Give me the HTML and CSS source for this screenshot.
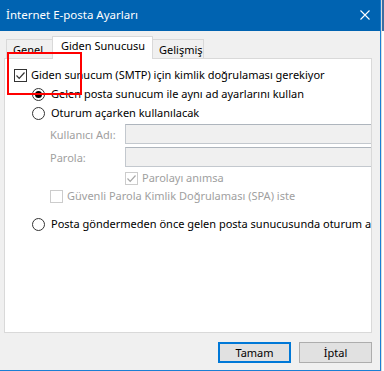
FILE: index.html
```html
<!DOCTYPE html>
<html lang="tr">
<head>
<meta charset="utf-8">
<title>İnternet E-posta Ayarları</title>
<link rel="stylesheet" href="styles.css">
</head>
<body>
<div class="page">
  <div class="dialog">
    <div class="titlebar">
      <span class="title">İnternet E-posta Ayarları</span>
      <svg class="close" width="10" height="10" viewBox="0 0 10 10"><path d="M0.5 0.5 L9.5 9.5 M9.5 0.5 L0.5 9.5" stroke="#fff" stroke-width="1.1" fill="none"/></svg>
    </div>
    <div class="tabs">
      <div class="tab first">Genel</div>
      <div class="tab active">Giden Sunucusu</div>
      <div class="tab">Gelişmiş</div>
    </div>
    <div class="panel">
      <div class="row r1">
        <span class="cb"><svg width="11" height="11" viewBox="0 0 11 11"><path d="M1.5 5.5 L4.2 8.3 L9.5 2.5" stroke="#333" stroke-width="1.2" fill="none"/></svg></span>
        <span class="lbl">Giden sunucum (SMTP) için kimlik doğrulaması gerekiyor</span>
      </div>
      <div class="row r2 ind1">
        <span class="radio on"></span>
        <span class="lbl">Gelen posta sunucum ile aynı ad ayarlarını kullan</span>
      </div>
      <div class="row r3 ind1">
        <span class="radio"></span>
        <span class="lbl">Oturum açarken kullanılacak</span>
      </div>
      <div class="row r4 ind2">
        <span class="field-lbl">Kullanıcı Adı:</span>
        <span class="input"></span>
      </div>
      <div class="row r5 ind2">
        <span class="field-lbl">Parola:</span>
        <span class="input"></span>
      </div>
      <div class="row r6 ind3">
        <span class="cb dis"><svg width="11" height="11" viewBox="0 0 11 11"><path d="M1.5 5.5 L4.2 8.3 L9.5 2.5" stroke="#a6a6a6" stroke-width="1.2" fill="none"/></svg></span>
        <span class="lbl dis-t">Parolayı anımsa</span>
      </div>
      <div class="row r7 ind2">
        <span class="cb dis"></span>
        <span class="lbl dis-t">Güvenli Parola Kimlik Doğrulaması (SPA) iste</span>
      </div>
      <div class="row r8 ind1">
        <span class="radio"></span>
        <span class="lbl">Posta göndermeden önce gelen posta sunucusunda oturum aç</span>
      </div>
    </div>
    <div class="buttons">
      <button class="btn default">Tamam</button>
      <button class="btn">İptal</button>
    </div>
    <div class="highlight"></div>
  </div>
  <div class="behind">
    <div class="behind-top"></div>
  </div>
</div>
</body>
</html>
```
FILE: styles.css
```css
html, body {
  margin: 0;
  padding: 0;
  background: #ffffff;
}
body {
  font-family: "Noto Sans", "DejaVu Sans", sans-serif;
  font-size: 11px;
  color: #000;
}
.page {
  display: flex;
  width: 384px;
  height: 371px;
  overflow: hidden;
}
.dialog {
  position: relative;
  width: 380px;
  height: 370px;
  flex: none;
  background: #f0f0f0;
  border-right: 1px solid #1a7fd4;
  border-bottom: 1px solid #1a7fd4;
  display: flex;
  flex-direction: column;
}
.titlebar {
  height: 31px;
  flex: none;
  background: #0063b1;
  color: #fff;
  display: flex;
  align-items: center;
  justify-content: space-between;
  padding: 0 10px 0 6px;
}
.title {
  font-size: 11.5px;
  line-height: 16px;
  margin-top: -1px;
}
.close {
  display: block;
  margin-top: -1px;
}
.tabs {
  margin-top: 6px;
  height: 21px;
  padding-left: 6px;
  display: flex;
  align-items: flex-end;
  position: relative;
  z-index: 1;
}
.tab {
  height: 18px;
  line-height: 20px;
  padding: 0 6px;
  border: 1px solid #d9d9d9;
  border-bottom: none;
  background: #f0f0f0;
  white-space: nowrap;
  box-sizing: content-box;
}
.tab.first {
  border-right: none;
  width: 33px;
}
.tab.active {
  height: 22px;
  line-height: 18px;
  background: #fff;
  margin-bottom: -1px;
  padding: 0 0 0 8px;
  width: 91px;
}
.tab.active + .tab {
  border-left: none;
  width: 38px;
}
.panel {
  margin: 0 8px 0 4px;
  flex: none;
  background: #fff;
  border: 1px solid #d9d9d9;
  overflow: hidden;
  display: flex;
  flex-direction: column;
  padding-top: 7px;
  box-sizing: border-box;
  height: 275px;
}
.row {
  display: flex;
  align-items: center;
  white-space: nowrap;
  flex: none;
}
.r1 { height: 18px; padding-left: 9px; }
.r2 { height: 18px; margin-top: 1px; }
.r3 { height: 18px; margin-top: 1px; }
.r4 { height: 20px; margin-top: 2px; }
.r5 { height: 20px; margin-top: 3px; }
.r6 { height: 16px; margin-top: 3px; }
.r7 { height: 16px; margin-top: 2px; }
.r8 { height: 18px; margin-top: 11px; }
.ind1 { padding-left: 27px; }
.ind2 { padding-left: 45px; }
.ind3 { padding-left: 120px; }
.cb {
  width: 11px;
  height: 11px;
  border: 1px solid #333;
  background: #fff;
  flex: none;
  display: flex;
}
.cb.dis {
  border-color: #cccccc;
}
.cb svg { display: block; }
.lbl {
  margin-left: 4px;
  line-height: 16px;
}
.dis-t, .field-lbl {
  color: #a0a0a0;
}
.field-lbl {
  width: 75px;
  flex: none;
}
.radio {
  width: 11px;
  height: 11px;
  border: 1px solid #333;
  border-radius: 50%;
  background: #fff;
  flex: none;
  display: flex;
  align-items: center;
  justify-content: center;
  margin-right: 2px;
}
.radio.on::after {
  content: "";
  width: 7px;
  height: 7px;
  border-radius: 50%;
  background: #000;
}
.input {
  height: 18px;
  width: 260px;
  flex: none;
  background: #f0f0f0;
  border: 1px solid #c3c8ce;
  border-top-color: #aeb5bd;
}
.buttons {
  display: flex;
  justify-content: flex-end;
  gap: 8px;
  padding-right: 8px;
  margin-top: 9px;
}
.btn {
  width: 73px;
  height: 21px;
  font: inherit;
  font-size: 11px;
  background: #e1e1e1;
  border: 1px solid #adadad;
  padding: 0;
  color: #000;
  box-sizing: border-box;
}
.btn.default {
  border: 2px solid #0078d7;
}
.highlight {
  position: absolute;
  left: 7px;
  top: 52px;
  width: 71px;
  height: 39px;
  border: 2px solid #ff0000;
  z-index: 2;
  pointer-events: none;
}
.behind {
  flex: 1;
  background: #fff;
  border-left: 1px solid #dcdcdc;
}
.behind-top {
  height: 31px;
  background: #3c6fa3;
}
```
